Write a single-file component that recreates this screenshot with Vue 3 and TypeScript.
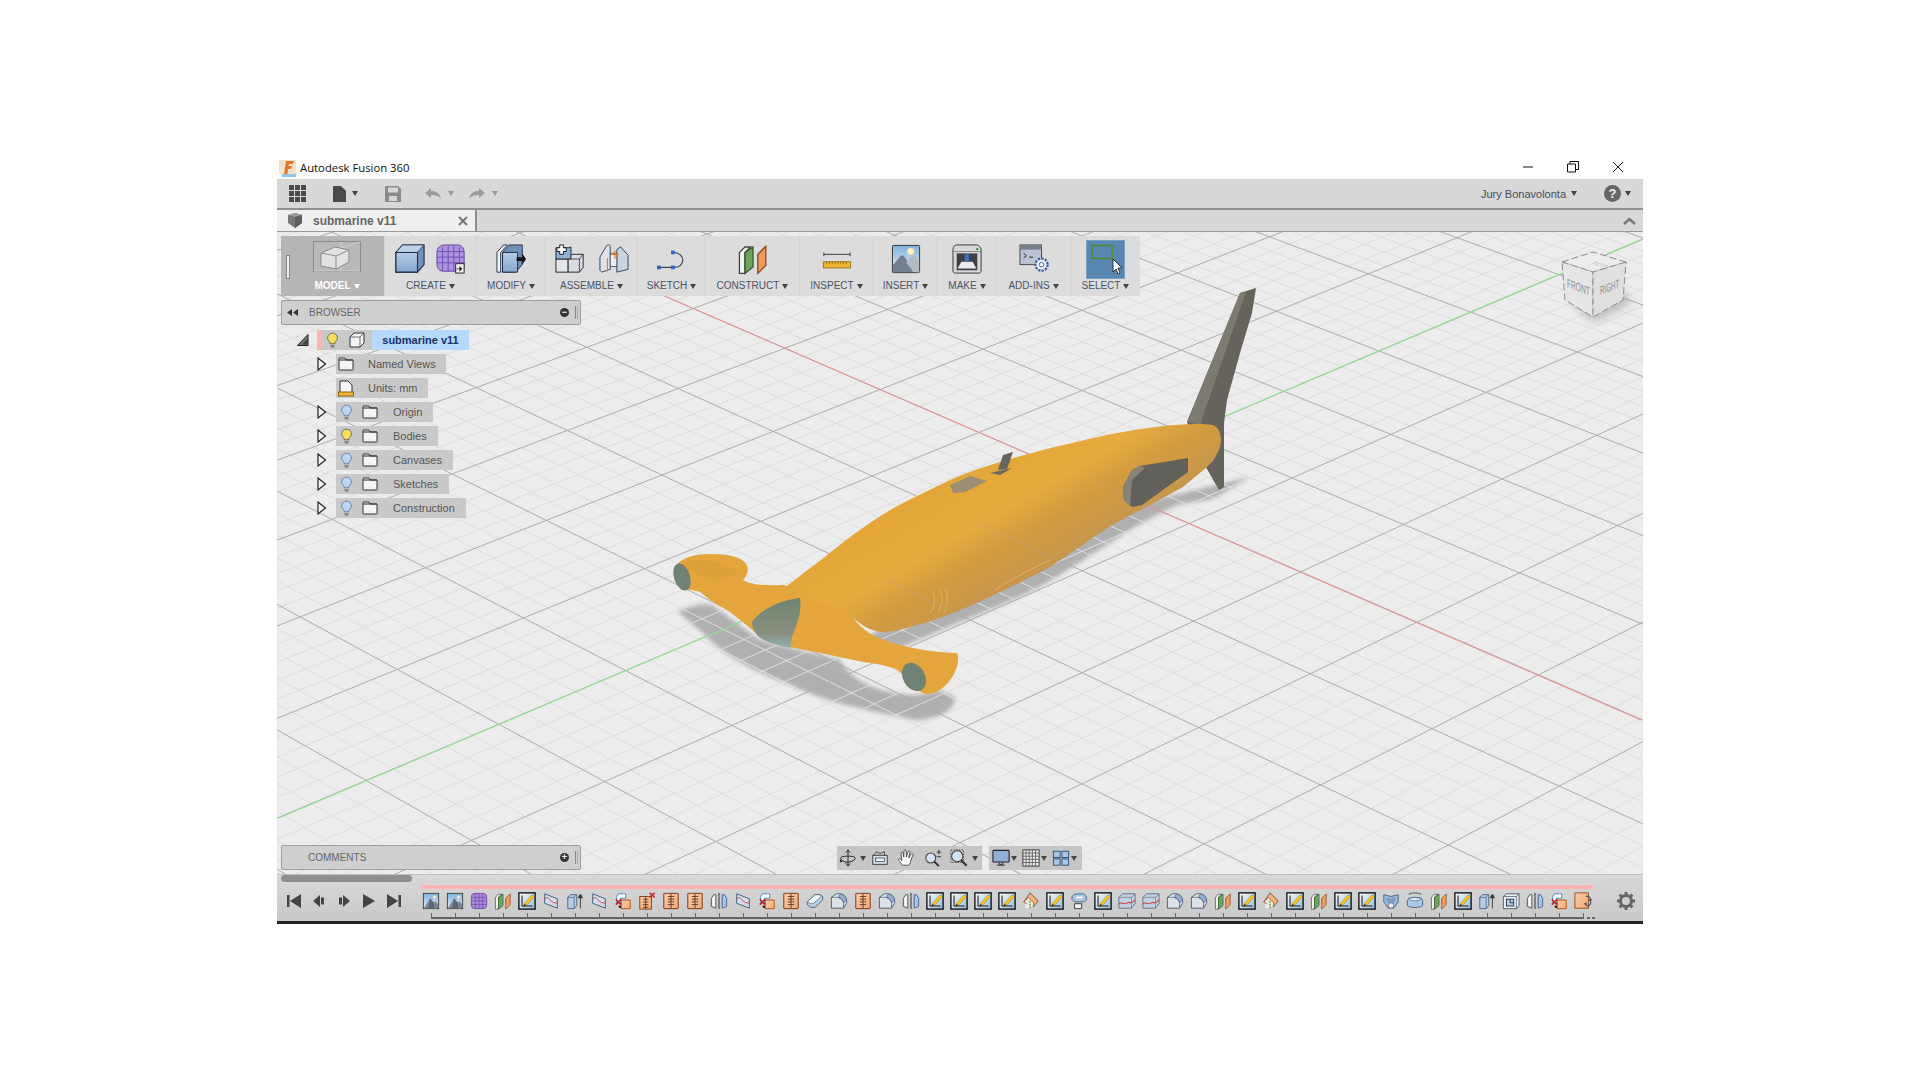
<template>
  <div class="page">
    <svg class="defs" width="0" height="0" aria-hidden="true">
      <defs>
        <linearGradient id="sky" x1="0" y1="0" x2="0" y2="1">
          <stop offset="0" stop-color="#7fb2dc" /><stop offset="1" stop-color="#e6eef5" />
        </linearGradient>
        <linearGradient id="blueFace" x1="0" y1="0" x2="0" y2="1">
          <stop offset="0" stop-color="#b5cde6" /><stop offset="1" stop-color="#86a7cf" />
        </linearGradient>
        <linearGradient id="paper" x1="0" y1="0" x2="1" y2="1">
          <stop offset="0" stop-color="#ffffff" /><stop offset="1" stop-color="#8fb6dc" />
        </linearGradient>
        <linearGradient id="orangeFace" x1="0" y1="0" x2="1" y2="1">
          <stop offset="0" stop-color="#fbcba6" /><stop offset="1" stop-color="#f0a878" />
        </linearGradient>

        <symbol id="image" viewBox="0 0 20 20">
          <rect x="1.5" y="1.5" width="17" height="17" fill="url(#sky)" stroke="#3a3a3a" />
          <path d="M2 18L9 7l4 5 2-2 3 4v4z" fill="#7d8796" />
          <path d="M9 7l4 5 1 6H7z" fill="#5e6776" />
          <circle cx="14" cy="5.5" r="1.6" fill="#fff3b8" />
        </symbol>
        <symbol id="mesh" viewBox="0 0 20 20">
          <rect x="1.5" y="1.5" width="17" height="17" rx="4" fill="#a98bdc" stroke="#6c4ca6" />
          <path d="M6 2v16M10 2v16M14 2v16M2 6h16M2 10h16M2 14h16" stroke="#6c4ca6" stroke-width=".8" fill="none" />
        </symbol>
        <symbol id="plane" viewBox="0 0 20 20">
          <path d="M1.5 6L5 2.5h3.5L5 6v13H1.5z" fill="#f2f2f2" stroke="#444" stroke-width=".8" />
          <path d="M5 6l5-3.5V15l-5 4z" fill="#6fa35b" stroke="#2f5a2a" stroke-width=".8" />
          <path d="M13 7l5-5v12l-5 5z" fill="#ee9a5e" stroke="#8a4a1e" stroke-width=".8" />
        </symbol>
        <symbol id="sketch" viewBox="0 0 20 20">
          <rect x="1" y="1" width="18" height="18" fill="url(#paper)" stroke="#000" stroke-width="1.4" />
          <path d="M4.5 4v11.5H16" stroke="#222" stroke-width="1.2" fill="none" />
          <path d="M7 13L15.5 3l2.5 2-8.5 10z" fill="#f6c522" stroke="#9a7a10" stroke-width=".5" />
          <path d="M7 13l-.8 3 3.3-1z" fill="#333" />
        </symbol>
        <symbol id="surf" viewBox="0 0 20 20">
          <path d="M3 2l14 5.5V18L3 12.5z" fill="#d4dcea" stroke="#4a5f85" stroke-width="1.1" />
          <path d="M3 7c4-2 5 1 7 3s4 2 7 2.5" stroke="#c9403a" stroke-width="1" fill="none" />
        </symbol>
        <symbol id="extrude" viewBox="0 0 20 20">
          <path d="M2 6l3-3h7v12l-3 3.500H2z" fill="#b8cfe8" stroke="#4a5f85" />
          <path d="M2 6h7v12.500M9 6l3-3" stroke="#4a5f85" fill="none" stroke-width=".8" />
          <path d="M16 18V4M13.600 6.500L16 2.500l2.400 4z" stroke="#333" fill="#333" stroke-width="1" />
        </symbol>
        <symbol id="combine" viewBox="0 0 20 20">
          <path d="M3 5l2-3h8v5H7v6H3z" fill="#fff" stroke="#3f7fc4" />
          <path d="M8 9h10v9.500H8z" fill="url(#orangeFace)" stroke="#b4561a" stroke-width="1.100" />
          <path d="M2 8l6 6M8 8l-6 6" stroke="#c8201c" stroke-width="1.700" />
          <circle cx="6.500" cy="16.500" r="1.400" fill="#222" />
        </symbol>
        <symbol id="ribx" viewBox="0 0 20 20">
          <rect x="2" y="5" width="13" height="14" fill="url(#orangeFace)" stroke="#7a3a1a" />
          <path d="M8.500 5v14M5.500 8h6M5.500 11h6M5.500 14h6M5.500 17h6" stroke="#5a2a10" fill="none" stroke-width=".9" />
          <path d="M13 1l5.500 5M18.500 1L13 6" stroke="#cc2a24" stroke-width="1.800" />
        </symbol>
        <symbol id="rib" viewBox="0 0 20 20">
          <rect x="2" y="1.500" width="16" height="17" rx=".5" fill="url(#orangeFace)" stroke="#7a3a1a" stroke-width="1.100" />
          <path d="M10 2v16M6.500 5h7M6.500 8h7M6.500 11h7M6.500 14h7" stroke="#4d2a14" fill="none" stroke-width=".9" />
        </symbol>
        <symbol id="mirror" viewBox="0 0 20 20">
          <path d="M6.500 3H4L1.500 7v9l5 2z" fill="#f2f2f2" stroke="#3f4d66" />
          <path d="M13.500 3H16l2.500 4v9l-5 2z" fill="#a9c6e4" stroke="#3f5f8f" />
          <path d="M10 1v18" stroke="#222" stroke-width="1" />
        </symbol>
        <symbol id="chamfer" viewBox="0 0 20 20">
          <path d="M1.500 11L10 3h6l2.500 2v4L10 17H5l-3.500-3z" fill="#b8cfe8" stroke="#47607f" />
          <path d="M1.500 11l3.500 2 3 0 9-8-1-2h-6z" fill="#f4f4f4" stroke="#47607f" stroke-width=".8" />
        </symbol>
        <symbol id="fillet" viewBox="0 0 20 20">
          <path d="M1.500 6L7 2h5c4 1 6 4 6.500 7v3L15 18H1.500z" fill="#dde1e8" stroke="#49566c" />
          <path d="M12 2c4 1 6 4 6.500 7l-3.500 3c-.5-3-2-5-6-6z" fill="#8fb0d6" stroke="#49566c" stroke-width=".7" />
          <path d="M1.500 6H9c3 1 5 3 6 6v6" fill="none" stroke="#49566c" stroke-width=".7" />
        </symbol>
        <symbol id="loft" viewBox="0 0 20 20">
          <path d="M9 1l9 9-6 7-10-6z" fill="#f3b383" stroke="#7a4a20" />
          <path d="M2 11l5-5 6 6-1.500 5z" fill="#f5e8dc" stroke="#7a4a20" stroke-width=".7" />
          <rect x="4" y="13" width="8" height="5" fill="#fff" opacity=".75" />
          <path d="M9 10v9" stroke="#4f9b37" stroke-width="1.600" stroke-dasharray="2 1" />
        </symbol>
        <symbol id="sweep" viewBox="0 0 20 20">
          <path d="M2 7c0-3 3-5 6-5h5c3 0 4 1 5 3v4c-1 2-3 2-5 2H6L4 10C2.700 9 2 8 2 7z" fill="#a9c6e4" stroke="#47607f" />
          <path d="M5 13h8v5.500H5z" fill="#f2f2f2" stroke="#333" />
          <path d="M7 6h7" stroke="#fff" stroke-width="2" />
        </symbol>
        <symbol id="boxred" viewBox="0 0 20 20">
          <path d="M1 6l4-4h14v11l-4 5H1z" fill="#c3d0e0" stroke="#5f6f88" />
          <path d="M1 6h14v12M15 6l4-4" stroke="#5f6f88" fill="none" stroke-width=".7" />
          <path d="M1 13c3-2 4 0 6 0s4-2 8-1l4-3" stroke="#cc2a24" fill="none" stroke-width="1.100" />
        </symbol>
        <symbol id="shell" viewBox="0 0 20 20">
          <path d="M2 3l8 2 8-2v8l-5 7H7l-5-7z" fill="#9dbbdc" stroke="#47607f" />
          <path d="M5 6l5 1 5-1v4l-3 3H8l-3-3z" fill="#7d9fc6" />
          <circle cx="10" cy="15" r="3" fill="#f2f2f2" stroke="#777" />
        </symbol>
        <symbol id="revolve" viewBox="0 0 20 20">
          <path d="M3 2.500c3-2 11-2 14 0" stroke="#444" fill="none" stroke-width="1" />
          <path d="M3 7c3-1.500 11-1.500 14 0l1.500 3v5c-2 3-15 3-17 0v-5z" fill="#a9c6e4" stroke="#47607f" />
          <ellipse cx="10" cy="8" rx="6" ry="1.800" fill="#e9eff6" stroke="#47607f" stroke-width=".7" />
        </symbol>
        <symbol id="box" viewBox="0 0 20 20">
          <path d="M1.500 5L5 2h14v13l-3 3.500H1.500z" fill="#e9ebee" stroke="#49566c" />
          <path d="M1.500 5h14.500v13.500M16 5l3-3" stroke="#49566c" fill="none" stroke-width=".8" />
          <rect x="5" y="8" width="8" height="7.500" fill="#b8cfe8" stroke="#22304a" />
          <path d="M9 8v4h4" stroke="#22304a" fill="none" />
        </symbol>
        <symbol id="replace" viewBox="0 0 20 20">
          <rect x="1" y="1" width="15" height="17" fill="url(#orangeFace)" stroke="#8a4a1e" />
          <path d="M13 5c3-1 6 1 5.500 4M14 15c4 1 5-3 4.500-5" stroke="#555" fill="none" stroke-width="1.400" />
          <path d="M16 8h4l-2 3zM11 13l3-2v5z" fill="#555" />
        </symbol>

        <symbol id="rib-box" viewBox="0 0 32 32">
          <path d="M1 9l7-8h23v21l-7 8H1z" fill="#6f90b8" stroke="#1f2d47" stroke-width="1.200" />
          <path d="M1 9l7-8h23l-7 8z" fill="#bcd0e6" stroke="#1f2d47" stroke-width=".8" />
          <path d="M1 9h23v21H1z" fill="url(#blueFace)" stroke="#1f2d47" stroke-width="1.200" />
        </symbol>
        <symbol id="rib-mesh" viewBox="0 0 32 32">
          <path d="M1 9c0-5 4-8 8-8h14c4 0 7 3 7 8v15c0 3-3 5-5 5H8c-4 0-7-3-7-7z" fill="#ad92e0" stroke="#5f3f9f" />
          <path d="M7 3v25M13 2v27M19 2v27M25 3v25M1 8h29M1 14h29M1 20h29" stroke="#6a4aaa" stroke-width=".9" fill="none" />
          <rect x="21" y="21" width="9" height="10" fill="#eee" stroke="#222" />
          <path d="M22 26h3v-2.500l3 3-3 3V27h-3z" fill="#222" />
        </symbol>
        <symbol id="rib-modify" viewBox="0 0 32 32">
          <path d="M1 9l7-8h4l-7 8v21H1z" fill="#f4f4f4" stroke="#1f2d47" />
          <path d="M7 9l7-8h14v21l-7 8H7z" fill="#6f90b8" stroke="#1f2d47" />
          <path d="M7 9h16v21H7z" fill="url(#blueFace)" stroke="#1f2d47" />
          <path d="M22 14h6v-4l4 6-4 6v-4h-6z" fill="#111" />
        </symbol>
        <symbol id="rib-assemble" viewBox="0 0 32 32">
          <rect x="1" y="16" width="13" height="14" fill="#e3e7ec" stroke="#222" />
          <path d="M14 16l4-5h12v14l-4 5H14z" fill="#dadde2" stroke="#222" />
          <path d="M14 16h12v14M26 16l4-5" fill="none" stroke="#222" stroke-width=".8" />
          <path d="M1 16V4h14l2-1v13z" fill="#8fb0d6" stroke="#222" />
          <path d="M5 1h4v3h3v4H9v3H5V8H2V4h3z" fill="#fff" stroke="#111" />
        </symbol>
        <symbol id="rib-joint" viewBox="0 0 32 32">
          <path d="M1 14L8 2c2-2 4-1 4 1v24L3 30l-2-2z" fill="#dfe3e8" stroke="#33415a" />
          <path d="M31 12L23 3l-4 3v24l4-1 8-2z" fill="#c9d4e2" stroke="#33415a" />
          <path d="M12 10h7v14h-7z" fill="#eef0f3" stroke="#33415a" stroke-width=".8" />
          <path d="M9 15v14M17 7v9M13 11h8" stroke="#ee7a1a" stroke-width="1.200" />
        </symbol>
        <symbol id="rib-sketch" viewBox="0 0 32 32">
          <path d="M2 25h15M17 25c14 1 14-16 0-16" fill="none" stroke="#3a4a60" stroke-width="1.300" />
          <rect x="0" y="23" width="4" height="4" fill="#3565c8" />
          <rect x="15" y="23" width="4" height="4" fill="#3565c8" />
          <rect x="15" y="7" width="4" height="4" fill="#3565c8" />
        </symbol>
        <symbol id="rib-ruler" viewBox="0 0 32 32">
          <path d="M2 9v4M2 11h28M30 9v4" stroke="#333" stroke-width="1" fill="none" />
          <rect x="1.500" y="19" width="29" height="6.500" fill="#f0b632" stroke="#9a7410" />
          <path d="M5 19v2.500M8 19v2.500M11 19v2.500M14 19v2.500M17 19v2.500M20 19v2.500M23 19v2.500M26 19v2.500" stroke="#7a5a10" stroke-width=".7" />
        </symbol>
        <symbol id="rib-image" viewBox="0 0 32 32">
          <rect x="1.500" y="1.500" width="29" height="29" rx="1" fill="url(#sky)" stroke="#2d2d2d" />
          <path d="M2 30V22c4-2 7-10 10-10s8 12 12 18z" fill="#757e8d" />
          <path d="M16 20c3-2 5-8 9-8l5 6v12h-5z" fill="#b2bac4" />
          <circle cx="21" cy="8" r="3.500" fill="#fff7c4" stroke="#f0dc96" />
        </symbol>
        <symbol id="rib-make" viewBox="0 0 32 32">
          <path d="M1 6c0-3 2-5 4-5h21c3 0 5 3 5 5v23c0 1-1 2-2 2H3c-1 0-2-1-2-2z" fill="#d7d7d7" stroke="#333" />
          <path d="M1 8h30" stroke="#888" />
          <rect x="5" y="10" width="22" height="18" fill="#3b4048" />
          <path d="M6 26l4-7h12l4 7z" fill="#ececec" />
          <rect x="13.500" y="11" width="4.500" height="7" fill="#3f73bd" />
          <rect x="26" y="4.500" width="2" height="2" fill="#1a8a1a" />
        </symbol>
        <symbol id="rib-addins" viewBox="0 0 32 32">
          <rect x="1" y="1" width="23" height="21" fill="#bcc3d2" stroke="#444" />
          <rect x="1" y="1" width="23" height="5" fill="#7b7f88" />
          <path d="M5 10l3 2.500-3 2.500M11 14h4" fill="none" stroke="#222" stroke-width="1" />
          <circle cx="24" cy="22" r="6.500" fill="#e9f0fa" stroke="#3f5f9f" stroke-width="2.400" stroke-dasharray="2.500 1.200" />
          <circle cx="24" cy="22" r="2.400" fill="#fff" stroke="#3f5f9f" />
        </symbol>
        <symbol id="rib-model" viewBox="0 0 48 32">
          <rect x=".5" y=".5" width="47" height="30" fill="#b9b9b9" stroke="#8c8c8c" />
          <path d="M1 30h46M28 1v29M28 7l19-6" stroke="#d8d8d8" stroke-width=".8" />
          <path d="M8 12l14-6 14 3v12l-13 7-15-3z" fill="#e2e2e2" stroke="#8b8b8b" />
          <path d="M8 12l15 3 13-6M23 15v13" stroke="#8b8b8b" fill="none" />
        </symbol>

        <symbol id="nav-orbit" viewBox="0 0 20 20">
          <path d="M10 1v18M7.500 4L10 1l2.500 3M7.500 16l2.500 3 2.500-3" stroke="#222" fill="none" />
          <path d="M3 12c-3-3 1-4 7-4s10 1 7 4-11 4-14 0z" fill="none" stroke="#222" stroke-width="1.100" />
          <path d="M1 11l3 3-3 1z" fill="#222" />
        </symbol>
        <symbol id="nav-look" viewBox="0 0 20 20">
          <rect x="2" y="7" width="16" height="10" fill="#d8e2ee" stroke="#333" />
          <rect x="5" y="10" width="10" height="4" fill="#f4f4f4" stroke="#333" stroke-width=".8" />
          <path d="M3 7l3-4 4 2 5-2v4" fill="none" stroke="#333" stroke-width=".9" />
        </symbol>
        <symbol id="nav-hand" viewBox="0 0 20 20">
          <path d="M6 18C4 15 1 12 2 11c1-1 3 1 3.500 2L4.500 5c0-2 2-2 2.300 0L7.500 9 7.800 2.500c0-2 2.400-2 2.400 0L10.500 9 12 3.500c.4-2 2.600-1.500 2.300.5L13 10l2.500-4c1-1.500 2.800-.5 2 1L15 14c-.5 2-1 3-2 4z" fill="#fff" stroke="#333" stroke-width=".9" />
        </symbol>
        <symbol id="nav-zoom" viewBox="0 0 20 20">
          <circle cx="7.500" cy="10" r="5.500" fill="#d4e4f2" stroke="#444" stroke-width="1.200" />
          <path d="M11.500 14l5 5" stroke="#333" stroke-width="2.200" />
          <path d="M14 3.500h5M16.500 1v5M14 8.500h5" stroke="#333" stroke-width="1" />
        </symbol>
        <symbol id="nav-fit" viewBox="0 0 20 20">
          <rect x="1" y="1" width="14" height="14" fill="none" stroke="#444" stroke-dasharray="1.500 1.500" />
          <circle cx="8" cy="8" r="6.200" fill="#d4e4f2" stroke="#444" stroke-width="1.200" />
          <path d="M12.500 12.500l6 6" stroke="#333" stroke-width="2.400" />
        </symbol>
        <symbol id="nav-display" viewBox="0 0 20 20">
          <rect x="1" y="1.500" width="18" height="13" rx="1" fill="#8fb0d6" stroke="#222" stroke-width="1.200" />
          <path d="M8 15v2h4v-2M5.500 18h9" stroke="#222" fill="none" />
        </symbol>
        <symbol id="nav-grid" viewBox="0 0 20 20">
          <rect x="1" y="1" width="18" height="18" fill="#e8e8e8" stroke="#333" />
          <path d="M4.500 1v18M8 1v18M11.500 1v18M15 1v18M1 4.500h18M1 8h18M1 11.500h18M1 15h18" stroke="#555" stroke-width=".9" />
        </symbol>
        <symbol id="nav-views" viewBox="0 0 20 20">
          <rect x="1.500" y="2.500" width="7.500" height="7" fill="#a9c6e4" stroke="#2f4a78" />
          <rect x="11" y="2.500" width="7.500" height="7" fill="#a9c6e4" stroke="#2f4a78" />
          <rect x="1.500" y="11" width="7.500" height="7" fill="#a9c6e4" stroke="#2f4a78" />
          <rect x="11" y="11" width="7.500" height="7" fill="#a9c6e4" stroke="#2f4a78" />
        </symbol>

        <symbol id="bulb-on" viewBox="0 0 16 20">
          <path d="M8 1c-4 0-6 3-6 6 0 2 1.500 3.500 3 5v2h6v-2c1.500-1.500 3-3 3-5 0-3-2-6-6-6z" fill="#f6e15a" stroke="#555" />
          <path d="M5.500 15.500h5v2l-1 1.500h-3l-1-1.500z" fill="#888" />
        </symbol>
        <symbol id="bulb-off" viewBox="0 0 16 20">
          <path d="M8 1c-4 0-6 3-6 6 0 2 1.500 3.500 3 5v2h6v-2c1.500-1.500 3-3 3-5 0-3-2-6-6-6z" fill="#bcd4f6" stroke="#5874a8" />
          <path d="M5.500 15.500h5v2l-1 1.500h-3l-1-1.500z" fill="#888" />
        </symbol>
        <symbol id="folder" viewBox="0 0 16 14">
          <path d="M1 3V12.500c0 .3.200.500.500.500h13c.3 0 .500-.200.500-.500V3H8L7 1H1.500C1.200 1 1 1.200 1 1.500z" fill="#f4f4f4" stroke="#333" />
          <path d="M1 3h14" stroke="#333" />
        </symbol>
      </defs>
    </svg>

    <div class="window">
      <header class="titlebar">
        <svg class="app-icon" viewBox="0 0 17 17">
          <rect width="17" height="14" fill="#f6e0cc" />
          <path d="M5 14L7 1h8l-1 3H10L9.500 6H13l-1 3H9L8.500 14z" fill="#e07a2a" />
          <rect x="3" y="14" width="14" height="3" fill="#8cc4ea" />
        </svg>
        <span class="app-title">Autodesk Fusion 360</span>
        <div class="win-controls">
          <svg width="12" height="12" viewBox="0 0 12 12"><path d="M1 6h10" stroke="#111" /></svg>
          <svg width="12" height="12" viewBox="0 0 12 12"><path d="M.5 3h8v8h-8zM3 3V.5h8.500V8.500H8.500" fill="none" stroke="#111" /></svg>
          <svg width="12" height="12" viewBox="0 0 12 12"><path d="M1 1l10 10M11 1L1 11" stroke="#111" /></svg>
        </div>
      </header>

      <div class="menubar">
        <svg class="m-grid" width="17" height="17" viewBox="0 0 17 17">
          <path d="M0 0h5v5H0zM6 0h5v5H6zM12 0h5v5h-5zM0 6h5v5H0zM6 6h5v5H6zM12 6h5v5h-5zM0 12h5v5H0zM6 12h5v5H6zM12 12h5v5h-5z" fill="#4a4a4a" />
        </svg>
        <svg class="m-file" width="13" height="16" viewBox="0 0 13 16"><path d="M0 0h8l5 5v11H0z" fill="#4a4a4a" /></svg>
        <i class="caret dark m-c1"></i>
        <svg class="m-save" width="16" height="16" viewBox="0 0 16 16">
          <path d="M0 0h13l3 3v13H0z" fill="#8a8a8a" /><rect x="3" y="1.500" width="10" height="5" fill="#d8d8d8" /><rect x="4" y="10" width="8" height="5" fill="#d8d8d8" />
        </svg>
        <svg class="m-undo" width="16" height="12" viewBox="0 0 16 12"><path d="M0 5l6-5v3c6 0 9 3 10 8-2-3-5-4-10-4v3z" fill="#9a9a9a" /></svg>
        <i class="caret light m-c2"></i>
        <svg class="m-redo" width="16" height="12" viewBox="0 0 16 12"><path d="M16 5l-6-5v3C4 3 1 6 0 11c2-3 5-4 10-4v3z" fill="#9a9a9a" /></svg>
        <i class="caret light m-c2b"></i>
        <span class="user">Jury Bonavolonta</span>
        <i class="caret dark m-c3"></i>
        <span class="help">?</span>
        <i class="caret dark m-c4"></i>
      </div>

      <div class="tabbar">
        <div class="tab">
          <svg width="16" height="15" viewBox="0 0 16 15">
            <path d="M1 2l7-2 7 2v8l-7 5-7-5z" fill="#777" /><path d="M1 2l7 2 7-2-7-2z" fill="#9a9a9a" /><path d="M8 4v11l7-5V2z" fill="#5f5f5f" />
          </svg>
          <span class="tab-name">submarine v11</span>
          <svg class="tab-close" width="10" height="10" viewBox="0 0 10 10"><path d="M1 1l8 8M9 1L1 9" stroke="#777" stroke-width="2" /></svg>
        </div>
        <svg class="collapse" width="13" height="8" viewBox="0 0 13 8"><path d="M1 7l5.500-5L12 7" fill="none" stroke="#777" stroke-width="2.400" /></svg>
      </div>

      <main class="viewport">
        <svg class="scene" viewBox="277 232 1366 642" width="1366" height="642">
          <defs>
            <linearGradient id="hull" gradientUnits="userSpaceOnUse" x1="990" y1="455" x2="1060" y2="575">
              <stop offset="0" stop-color="#e3a637" />
              <stop offset=".38" stop-color="#e6aa3f" />
              <stop offset=".62" stop-color="#d29b40" />
              <stop offset="1" stop-color="#c39552" />
            </linearGradient>
            <linearGradient id="intake" x1="0" y1="0" x2="0" y2="1">
              <stop offset="0" stop-color="#6f8471" /><stop offset=".7" stop-color="#8a8f80" /><stop offset="1" stop-color="#8fb0b0" />
            </linearGradient>
            <filter id="soft"><feGaussianBlur stdDeviation="2" /></filter>
            <filter id="softer"><feGaussianBlur stdDeviation="4" /></filter>
            <clipPath id="hullClip"><path :d="lowerHull" /></clipPath>
          </defs>

          <rect x="277" y="232" width="1366" height="642" fill="#ececec" />
          <path
            d="M678 612C690 605 705 603 712 605L760 640 840 660C850 680 880 695 917 695L940 690 955 697C955 708 945 718 917 720 870 712 820 700 790 685 750 670 725 655 710 640 700 630 690 622 678 612zM860 640L1000 570 1110 510 1250 477 1213 499 1177 505C1160 513 1140 524 1127 532L1052 580C1020 598 990 610 960 622L900 648z"
            fill="#b0b0b0"
            filter="url(#soft)"
          />
          <g fill="none">
            <path :d="gridMinor" stroke="#dedede" stroke-width="1" />
            <path id="gridMajorLines" :d="gridMajor" stroke="#adadad" stroke-width="1" />
          </g>
          <path d="M667 297L1641 720" stroke="#ef8d8d" stroke-width="1" />
          <path d="M279 818L1642 239" stroke="#8fe98f" stroke-width="1" />

          <!-- navigation cube -->
          <path d="M1572 302L1593 322 1632 302 1620 290z" fill="#9a9a9a" opacity=".6" filter="url(#softer)" />
          <path d="M1562 262L1593 252 1626 262 1593 272z" fill="#ececec" stroke="#8c8c8c" stroke-dasharray="7 3" />
          <path d="M1562 262L1593 272V317L1565 300z" fill="#e6e6e6" stroke="#8c8c8c" stroke-dasharray="7 3" />
          <path d="M1626 262L1593 272V317L1623 300z" fill="#e0e0e0" stroke="#8c8c8c" stroke-dasharray="7 3" />
          <text class="cube-txt" transform="matrix(.55 .21 0 1 1567 287)">FRONT</text>
          <text class="cube-txt" transform="matrix(.52 -.2 0 1 1600 295)">RIGHT</text>
          <text class="cube-txt faint" transform="matrix(.7 .22 -.7 .22 1590 263)">TOP</text>

          <!-- tail fins, behind the hull -->
          <path d="M1240 293L1256 288 1252 313 1240 353 1227 400 1224 423V487L1219 490 1203 462 1187 422z" fill="#65635c" />
          <path d="M1240 293L1246 292 1200 425 1187 422z" fill="#7d7b70" />
          <!-- wing and nacelles -->
          <path
            d="M675 568C680 556 700 552 727 555 740 557 748 562 748 570 747 575 745 578 743 580 750 585 770 586 783 585L853 600 853 617C860 628 870 634 877 637 890 643 920 652 957 653 960 658 957 672 950 680 945 688 935 694 927 694 918 693 905 680 900 672 895 667 880 664 863 662L830 655 790 647C775 643 765 640 760 637L750 628 730 612 710 600 700 592 692 590C684 590 680 587 680 587 676 583 675 575 675 568z"
            fill="#e4a63c"
          />
          <path d="M680 566C690 556 720 560 740 572L715 582z" fill="#d99f3a" opacity=".7" />
          <ellipse cx="682" cy="577" rx="8" ry="14" transform="rotate(-18 682 577)" fill="#6f8274" />
          <ellipse cx="914" cy="677" rx="11" ry="15" transform="rotate(-30 914 677)" fill="#6f8274" />
          <path d="M780 590C790 585 800 575 817 563 840 545 870 520 903 503 925 492 940 485 950 480 990 462 1060 445 1117 433 1150 427 1190 422 1213 425 1221 428 1222 440 1220 447 1216 458 1212 462 1207 467L1183 487C1160 500 1130 515 1107 528L1050 567C1020 583 1000 592 983 600 955 613 930 622 917 625 900 630 890 632 883 632 872 632 860 625 853 617 835 605 800 598 780 590z" fill="url(#hull)" />
          <use href="#gridMajorLines" clip-path="url(#hullClip)" opacity=".3" />
          <path d="M752 622C762 608 782 600 800 598 802 612 797 625 792 637L790 648C778 645 764 642 758 636 754 632 752 627 752 622z" fill="url(#intake)" />
          <path d="M940 590c3 8 3 14-2 22M945 588c3 8 3 16-1 25M933 592c3 7 2 14-3 21M1050 560c-25 12-40 20-55 30" fill="none" stroke="#e9b452" stroke-width=".9" />
          <path d="M950 485L970 476 987 481 965 492 953 493z" fill="#9a8f74" />
          <path d="M990 473L1012 468 1000 475z" fill="#6a675e" />
          <path d="M998 470L1003 455 1013 452 1007 469z" fill="#66645c" />
          <path d="M1123 487L1132 470 1140 466 1188 458V472L1142 505 1132 507 1124 500z" fill="#62605a" />
          <path d="M1123 487L1132 470 1140 466 1145 468 1132 480 1130 506 1124 500z" fill="#85837a" />
        </svg>

        <div class="ribbon">
          <div
            v-for="g in ribbon"
            :key="g.label"
            class="rib-group"
            :class="{ active: g.label === 'MODEL' }"
            :style="{ width: g.width + 'px' }"
          >
            <div class="rib-icons" :style="{ gap: g.gap + 'px' }">
              <svg
                v-for="ic in g.icons"
                :key="ic"
                class="rib-icon"
                :class="{ wide: ic === 'rib-model', plane: ic === 'plane' }"
              ><use :href="'#' + ic" /></svg>
              <span v-if="g.label === 'SELECT'" class="select-btn">
                <svg width="30" height="30" viewBox="0 0 30 30">
                  <rect x="5" y="4.500" width="20" height="13" fill="none" stroke="#4f8a1a" stroke-width="1.400" />
                  <path d="M26 18v13l3-3 2 5 2-1-2-5h4z" fill="#fff" stroke="#111" stroke-width=".8" />
                </svg>
              </span>
            </div>
            <div class="rib-label">{{ g.label }}<i class="caret" :class="g.label === 'MODEL' ? 'white' : 'dark'"></i></div>
            <span v-if="g.label === 'MODEL'" class="handle"></span>
          </div>
        </div>

        <aside class="browser">
          <div class="panel-head">
            <svg width="11" height="7" viewBox="0 0 11 7"><path d="M5 0v7L0 3.500zM11 0v7L6 3.500z" fill="#333" /></svg>
            <span class="panel-title">BROWSER</span>
            <span class="round-btn">−</span>
            <span class="grip"></span>
          </div>
          <div class="tree">
            <div class="row root">
              <svg class="root-arrow" width="12" height="12" viewBox="0 0 12 12"><path d="M11 .5V11.500H.5z" fill="#777" stroke="#222" /><path d="M11 4L5 10.500H11z" fill="#444" /></svg>
              <span class="pink"></span>
              <span class="pill root-pill">
                <svg class="bulb"><use href="#bulb-on" /></svg>
                <svg width="16" height="16" viewBox="0 0 16 16"><path d="M1 5l4-4h10v10l-4 4H1z" fill="#f4f4f4" stroke="#333" /><path d="M1 5h10v10M11 5l4-4" fill="none" stroke="#333" stroke-width=".7" /></svg>
              </span>
              <span class="root-name">submarine v11</span>
            </div>
            <div v-for="r in rows" :key="r.name" class="row" :class="'row-' + r.kind">
              <svg class="expander" :class="{ none: r.kind === 'units' }" width="10" height="14" viewBox="0 0 10 14"><path d="M1 1l7.500 6L1 13z" fill="#f2f2f2" stroke="#222" stroke-width="1.200" /></svg>
              <span class="pill">
                <svg v-if="r.kind === 'units'" class="unit-icon" viewBox="0 0 16 17">
                  <path d="M2 12V1h8l4 4v7" fill="#f6f6f6" stroke="#333" />
                  <rect x=".5" y="12" width="15" height="4" fill="#f0b632" stroke="#8a6410" />
                </svg>
                <svg v-else-if="r.bulb" class="bulb"><use :href="r.bulb === 'on' ? '#bulb-on' : '#bulb-off'" /></svg>
                <svg v-if="r.kind !== 'units'" class="folder"><use href="#folder" /></svg>
                <span class="row-text">{{ r.name }}</span>
              </span>
            </div>
          </div>
        </aside>

        <div class="comments">
          <span class="panel-title">COMMENTS</span>
          <span class="round-btn">+</span>
          <span class="grip"></span>
        </div>

        <div class="view-tools">
          <div class="tool-box first">
            <svg class="t-icon"><use href="#nav-orbit" /></svg>
            <i class="caret dark c-a"></i>
            <svg class="t-icon s1"><use href="#nav-look" /></svg>
            <svg class="t-icon s2"><use href="#nav-hand" /></svg>
            <svg class="t-icon s3"><use href="#nav-zoom" /></svg>
            <svg class="t-icon s2"><use href="#nav-fit" /></svg>
            <i class="caret dark c-b"></i>
          </div>
          <div class="tool-box second">
            <svg class="t-icon"><use href="#nav-display" /></svg>
            <i class="caret dark"></i>
            <svg class="t-icon s5"><use href="#nav-grid" /></svg>
            <i class="caret dark"></i>
            <svg class="t-icon s5"><use href="#nav-views" /></svg>
            <i class="caret dark"></i>
          </div>
        </div>
      </main>

      <footer class="bottom">
        <div class="scroll-thumb"></div>
        <div class="strip"></div>
        <div class="tl-row">
          <div class="playback">
            <svg width="14" height="14" viewBox="0 0 14 14"><path d="M0 1h2.500v12H0zM14 0v14L3 7z" fill="#444" /></svg>
            <svg width="14" height="14" viewBox="0 0 14 14"><path d="M8 1v12L1 7zM9 3.500h3v7H9z" fill="#444" /></svg>
            <svg width="14" height="14" viewBox="0 0 14 14"><path d="M6 1v12l7-6zM2 3.500h3v7H2z" fill="#444" /></svg>
            <svg width="14" height="14" viewBox="0 0 14 14"><path d="M1 0v14l12-7z" fill="#444" /></svg>
            <svg width="14" height="14" viewBox="0 0 14 14"><path d="M11.500 1H14v12h-2.500zM0 0v14l11-7z" fill="#444" /></svg>
          </div>
          <div class="track">
            <div class="tl-icons">
              <span v-for="(id, i) in timeline" :key="i" class="tl-slot">
                <svg class="tl-icon"><use :href="'#' + id" /></svg>
              </span>
            </div>
            <div class="tl-ticks"></div>
            <div class="tl-rule"><span class="tl-dash"></span></div>
          </div>
          <svg class="gear" width="18" height="18" viewBox="0 0 18 18">
            <circle cx="9" cy="9" r="5.500" fill="none" stroke="#666" stroke-width="3" />
            <path d="M9 0v3M9 15v3M0 9h3M15 9h3M2.600 2.600l2.100 2.100M13.300 13.300l2.100 2.100M2.600 15.400l2.100-2.100M13.300 4.700l2.100-2.100" stroke="#666" stroke-width="3" />
          </svg>
        </div>
        <div class="edge"></div>
      </footer>
    </div>
  </div>
</template>

<script setup lang="ts">
interface RibbonGroup {
  label: string;
  width: number;
  gap: number;
  icons: string[];
}

interface TreeRow {
  name: string;
  kind: "folder" | "units" | "named";
  bulb?: "on" | "off";
}

const ribbon: RibbonGroup[] = [
  { label: "MODEL", width: 103, gap: 0, icons: ["rib-model"] },
  { label: "CREATE", width: 92, gap: 11, icons: ["rib-box", "rib-mesh"] },
  { label: "MODIFY", width: 69, gap: 0, icons: ["rib-modify"] },
  { label: "ASSEMBLE", width: 92, gap: 14, icons: ["rib-assemble", "rib-joint"] },
  { label: "SKETCH", width: 68, gap: 0, icons: ["rib-sketch"] },
  { label: "CONSTRUCT", width: 94, gap: 0, icons: ["plane"] },
  { label: "INSPECT", width: 74, gap: 0, icons: ["rib-ruler"] },
  { label: "INSERT", width: 64, gap: 0, icons: ["rib-image"] },
  { label: "MAKE", width: 59, gap: 0, icons: ["rib-make"] },
  { label: "ADD-INS", width: 74, gap: 0, icons: ["rib-addins"] },
  { label: "SELECT", width: 70, gap: 0, icons: [] },
];

const rows: TreeRow[] = [
  { name: "Named Views", kind: "named" },
  { name: "Units: mm", kind: "units" },
  { name: "Origin", kind: "folder", bulb: "off" },
  { name: "Bodies", kind: "folder", bulb: "on" },
  { name: "Canvases", kind: "folder", bulb: "off" },
  { name: "Sketches", kind: "folder", bulb: "off" },
  { name: "Construction", kind: "folder", bulb: "off" },
];

const timeline = [
  "image", "image", "mesh", "plane", "sketch", "surf", "extrude", "surf", "combine", "ribx",
  "rib", "rib", "mirror", "surf", "combine", "rib", "chamfer", "fillet", "rib", "fillet",
  "mirror", "sketch", "sketch", "sketch", "sketch", "loft", "sketch", "sweep", "sketch", "boxred",
  "boxred", "fillet", "fillet", "plane", "sketch", "loft", "sketch", "plane", "sketch", "sketch",
  "shell", "revolve", "plane", "sketch", "extrude", "box", "mirror", "combine", "replace",
];

// ground plane grid, projected around the origin where the red and green axes cross
const origin = { x: 1082, y: 477 };
const project = (u: number, v: number): string => {
  const w = 1 - 0.004 * u + 0.004 * v;
  const x = origin.x + (u * 21 + v * 21) / w;
  const y = origin.y + (u * 9.1 - v * 8.9) / w;
  return `${x.toFixed(1)} ${y.toFixed(1)}`;
};

const buildGrid = (major: boolean): string => {
  const n = 60;
  let d = "";
  for (let i = -n; i <= n; i++) {
    if ((i % 5 === 0) !== major) continue;
    d += `M${project(i, -n)}L${project(i, n)}M${project(-n, i)}L${project(n, i)}`;
  }
  return d;
};

const gridMinor = buildGrid(false);
const gridMajor = buildGrid(true);

const lowerHull =
  "M853 617C880 570 960 530 1040 500L1218 445 1207 467 1183 487 1143 508 1107 528 1050 567 983 600 917 625 883 632 867 630z";
</script>

<style scoped>
.page {
  width: 1920px;
  height: 1080px;
  padding: 160px 0 0 277px;
  box-sizing: border-box;
  background: #fff;
  font-family: "Liberation Sans", Arial, sans-serif;
  overflow: hidden;
}

.defs {
  position: absolute;
}

.window {
  width: 1366px;
  display: flex;
  flex-direction: column;
}

.titlebar {
  height: 19px;
  padding-bottom: 5px;
  box-sizing: border-box;
  display: flex;
  align-items: center;
  background: #fff;
}

.app-icon {
  width: 17px;
  height: 17px;
  margin-left: 2px;
  margin-bottom: -2px;
}

.app-title {
  margin-left: 4px;
  font-family: "Open Sans", sans-serif;
  font-size: 11.3px;
  color: #111;
}

.win-controls {
  margin-left: auto;
  margin-right: 19px;
  display: flex;
  gap: 33px;
}

.menubar {
  height: 29px;
  display: flex;
  align-items: center;
  background: #d8d8d8;
  border-bottom: 2px solid #8f8f8f;
}

.caret {
  display: inline-block;
  flex: none;
  width: 0;
  height: 0;
  border-left: 3.5px solid transparent;
  border-right: 3.5px solid transparent;
  border-top: 5px solid #444;
}

.caret.light { border-top-color: #999; }
.caret.white { border-top-color: #fff; }

.m-grid { margin-left: 12px; }
.m-file { margin-left: 27px; }
.m-c1 { margin-left: 6px; }
.m-save { margin-left: 27px; }
.m-undo { margin-left: 24px; }
.m-c2 { margin-left: 7px; margin-right: 15px; }
.m-c2b { margin-left: 7px; }
.user {
  margin-left: 983px;
  font-size: 11px;
  color: #444c5c;
}
.m-c3 { margin-left: 5px; }
.help {
  margin-left: 27px;
  width: 17px;
  height: 17px;
  border-radius: 50%;
  background: #666;
  color: #eee;
  font-size: 13px;
  font-weight: 700;
  line-height: 17px;
  text-align: center;
}
.m-c4 { margin-left: 4px; }

.tabbar {
  height: 22px;
  display: flex;
  align-items: center;
  background: #d8d8d8;
  border-bottom: 1px solid #9a9a9a;
  box-sizing: border-box;
}

.tab {
  width: 198px;
  height: 100%;
  display: flex;
  align-items: center;
  background: #efefef;
  border-right: 2px solid #8f8f8f;
}

.tab svg:first-child { margin-left: 10px; }

.tab-name {
  margin-left: 10px;
  font-size: 12px;
  font-weight: 700;
  color: #666;
}

.tab-close { margin-left: auto; margin-right: 7px; }

.collapse { margin-left: auto; margin-right: 7px; }

.viewport {
  position: relative;
  height: 642px;
  overflow: hidden;
}

.scene {
  position: absolute;
  inset: 0;
}

.cube-txt {
  font-family: "Liberation Sans", sans-serif;
  font-size: 12px;
  fill: #8a8a8a;
}

.cube-txt.faint { fill: #b4b4b4; font-size: 10px; }

.ribbon {
  position: absolute;
  left: 4px;
  top: 4px;
  display: flex;
  height: 60px;
  background: #dcdcdc;
}

.rib-group {
  position: relative;
  box-sizing: border-box;
  display: flex;
  flex-direction: column;
  align-items: center;
  border-left: 1px solid #d2d2d2;
}

.rib-group.active {
  background: #b5b5b5;
  border-left: 0;
  padding-left: 9px;
}

.rib-icons {
  height: 38px;
  padding-top: 8px;
  box-sizing: border-box;
  display: flex;
  align-items: flex-start;
}

.rib-icon { width: 30px; height: 30px; }
.rib-icon.wide { width: 48px; height: 32px; margin-top: -3px; }
.rib-icon.plane { width: 32px; height: 32px; margin-top: -1px; }

.select-btn {
  width: 39px;
  height: 39px;
  margin-top: -4px;
  background: #5986b0;
  border: 1px solid #7aa0c4;
  box-sizing: border-box;
  overflow: visible;
}

.select-btn svg { overflow: visible; }

.rib-label {
  margin-top: 6px;
  display: flex;
  align-items: center;
  gap: 3px;
  font-size: 10px;
  line-height: 12px;
  color: #4a5468;
}

.active .rib-label { color: #fff; font-weight: 700; }

.handle {
  position: absolute;
  left: 5px;
  top: 19px;
  width: 2px;
  height: 22px;
  border: 1px solid #888;
  background: #eee;
}

.browser {
  position: absolute;
  left: 4px;
  top: 68px;
  width: 300px;
}

.panel-head,
.comments {
  box-sizing: border-box;
  height: 25px;
  display: flex;
  align-items: center;
  background: #cfcfcf;
  border: 1px solid #9e9e9e;
  border-radius: 2px;
}

.panel-head svg { margin-left: 5px; }

.panel-title {
  margin-left: 11px;
  font-size: 10px;
  color: #666;
}

.comments .panel-title { margin-left: 26px; }

.round-btn {
  margin-left: auto;
  width: 9px;
  height: 9px;
  border-radius: 50%;
  background: #333;
  color: #fff;
  font-size: 9px;
  font-weight: 700;
  line-height: 9px;
  text-align: center;
}

.grip {
  margin-left: 6px;
  margin-right: 2px;
  width: 1px;
  height: 13px;
  border-left: 1px solid #888;
  border-right: 1px solid #aaa;
}

.tree {
  margin-top: 5px;
  display: flex;
  flex-direction: column;
  gap: 4px;
}

.row {
  height: 20px;
  display: flex;
  align-items: center;
  padding-left: 36px;
}

.expander { margin-right: 9px; flex: none; }
.expander.none { visibility: hidden; }

.pill {
  height: 20px;
  display: flex;
  align-items: center;
  background: #c9c9c9;
  padding-right: 11px;
}

.bulb {
  width: 13px;
  height: 17px;
  margin-left: 4px;
}

.folder {
  width: 16px;
  height: 14px;
  margin-left: 9px;
}

.row-named .folder { margin-left: 2px; }

.unit-icon {
  width: 16px;
  height: 17px;
  margin-left: 2px;
}

.row-text {
  margin-left: 15px;
  font-size: 11px;
  color: #555;
}

.row-named .row-text,
.row-units .row-text { margin-left: 14px; }
.row-named .pill,
.row-units .pill { padding-right: 10px; }

.root { padding-left: 16px; }
.root-arrow { margin-right: 8px; }
.pink {
  width: 5px;
  height: 20px;
  background: #ffb3b3;
  flex: none;
}

.root-pill { padding-right: 6px; width: 50px; box-sizing: border-box; flex: none; }
.root-pill svg:last-child { margin-left: 10px; }

.root-name {
  width: 97px;
  height: 20px;
  background: #b7d8ff;
  font-size: 11px;
  font-weight: 700;
  line-height: 20px;
  text-align: center;
  color: #17325f;
}

.comments {
  position: absolute;
  left: 4px;
  bottom: 4px;
  width: 300px;
}

.view-tools {
  position: absolute;
  left: 560px;
  bottom: 4px;
  display: flex;
  gap: 7px;
}

.tool-box {
  height: 24px;
  display: flex;
  align-items: center;
  background: #c6c6c6;
  box-sizing: border-box;
}

.tool-box.first { width: 145px; padding-left: 2px; }
.tool-box.second { width: 93px; padding-left: 3px; gap: 1px; }

.t-icon { width: 18px; height: 18px; flex: none; }
.c-a { margin-left: 3px; }
.c-b { margin-left: 4px; }
.s1 { margin-left: 5px; }
.s2 { margin-left: 8px; }
.s3 { margin-left: 9px; }
.s5 { margin-left: 4px; }

.bottom {
  height: 50px;
  display: flex;
  flex-direction: column;
  background: linear-gradient(#d8d8d8, #c8c8c8);
  border-top: 1px solid #bdbdbd;
  box-sizing: border-box;
}

.scroll-thumb {
  width: 131px;
  height: 7px;
  margin-left: 4px;
  border-radius: 4px;
  background: #8f8f8f;
}

.strip {
  width: 1172px;
  height: 4px;
  margin: 3px 0 0 144px;
  background: #ffb3b3;
}

.tl-row {
  height: 32px;
  display: flex;
}

.playback {
  width: 142px;
  height: 24px;
  flex: none;
  padding: 0 0 0 10px;
  box-sizing: border-box;
  display: flex;
  align-items: center;
  gap: 11px;
}

.track { flex: none; }

.tl-icons {
  display: flex;
  padding-top: 3px;
}

.tl-slot {
  width: 24px;
  height: 18px;
  display: flex;
  justify-content: center;
}

.tl-icon { width: 18px; height: 18px; }

.tl-ticks {
  width: 1153px;
  height: 4px;
  margin: 3px 0 0 12px;
  background: repeating-linear-gradient(90deg, #666 0 1px, transparent 1px 24px);
}

.tl-rule {
  position: relative;
  width: 1153px;
  height: 2px;
  margin-left: 12px;
  background: #666;
}

.tl-dash {
  position: absolute;
  left: 1156px;
  top: 0;
  width: 8px;
  height: 2px;
  background: repeating-linear-gradient(90deg, #666 0 3px, transparent 3px 5px);
}

.gear {
  margin: 3px 0 0 22px;
}

.edge {
  height: 3px;
  background: #222;
}
</style>
